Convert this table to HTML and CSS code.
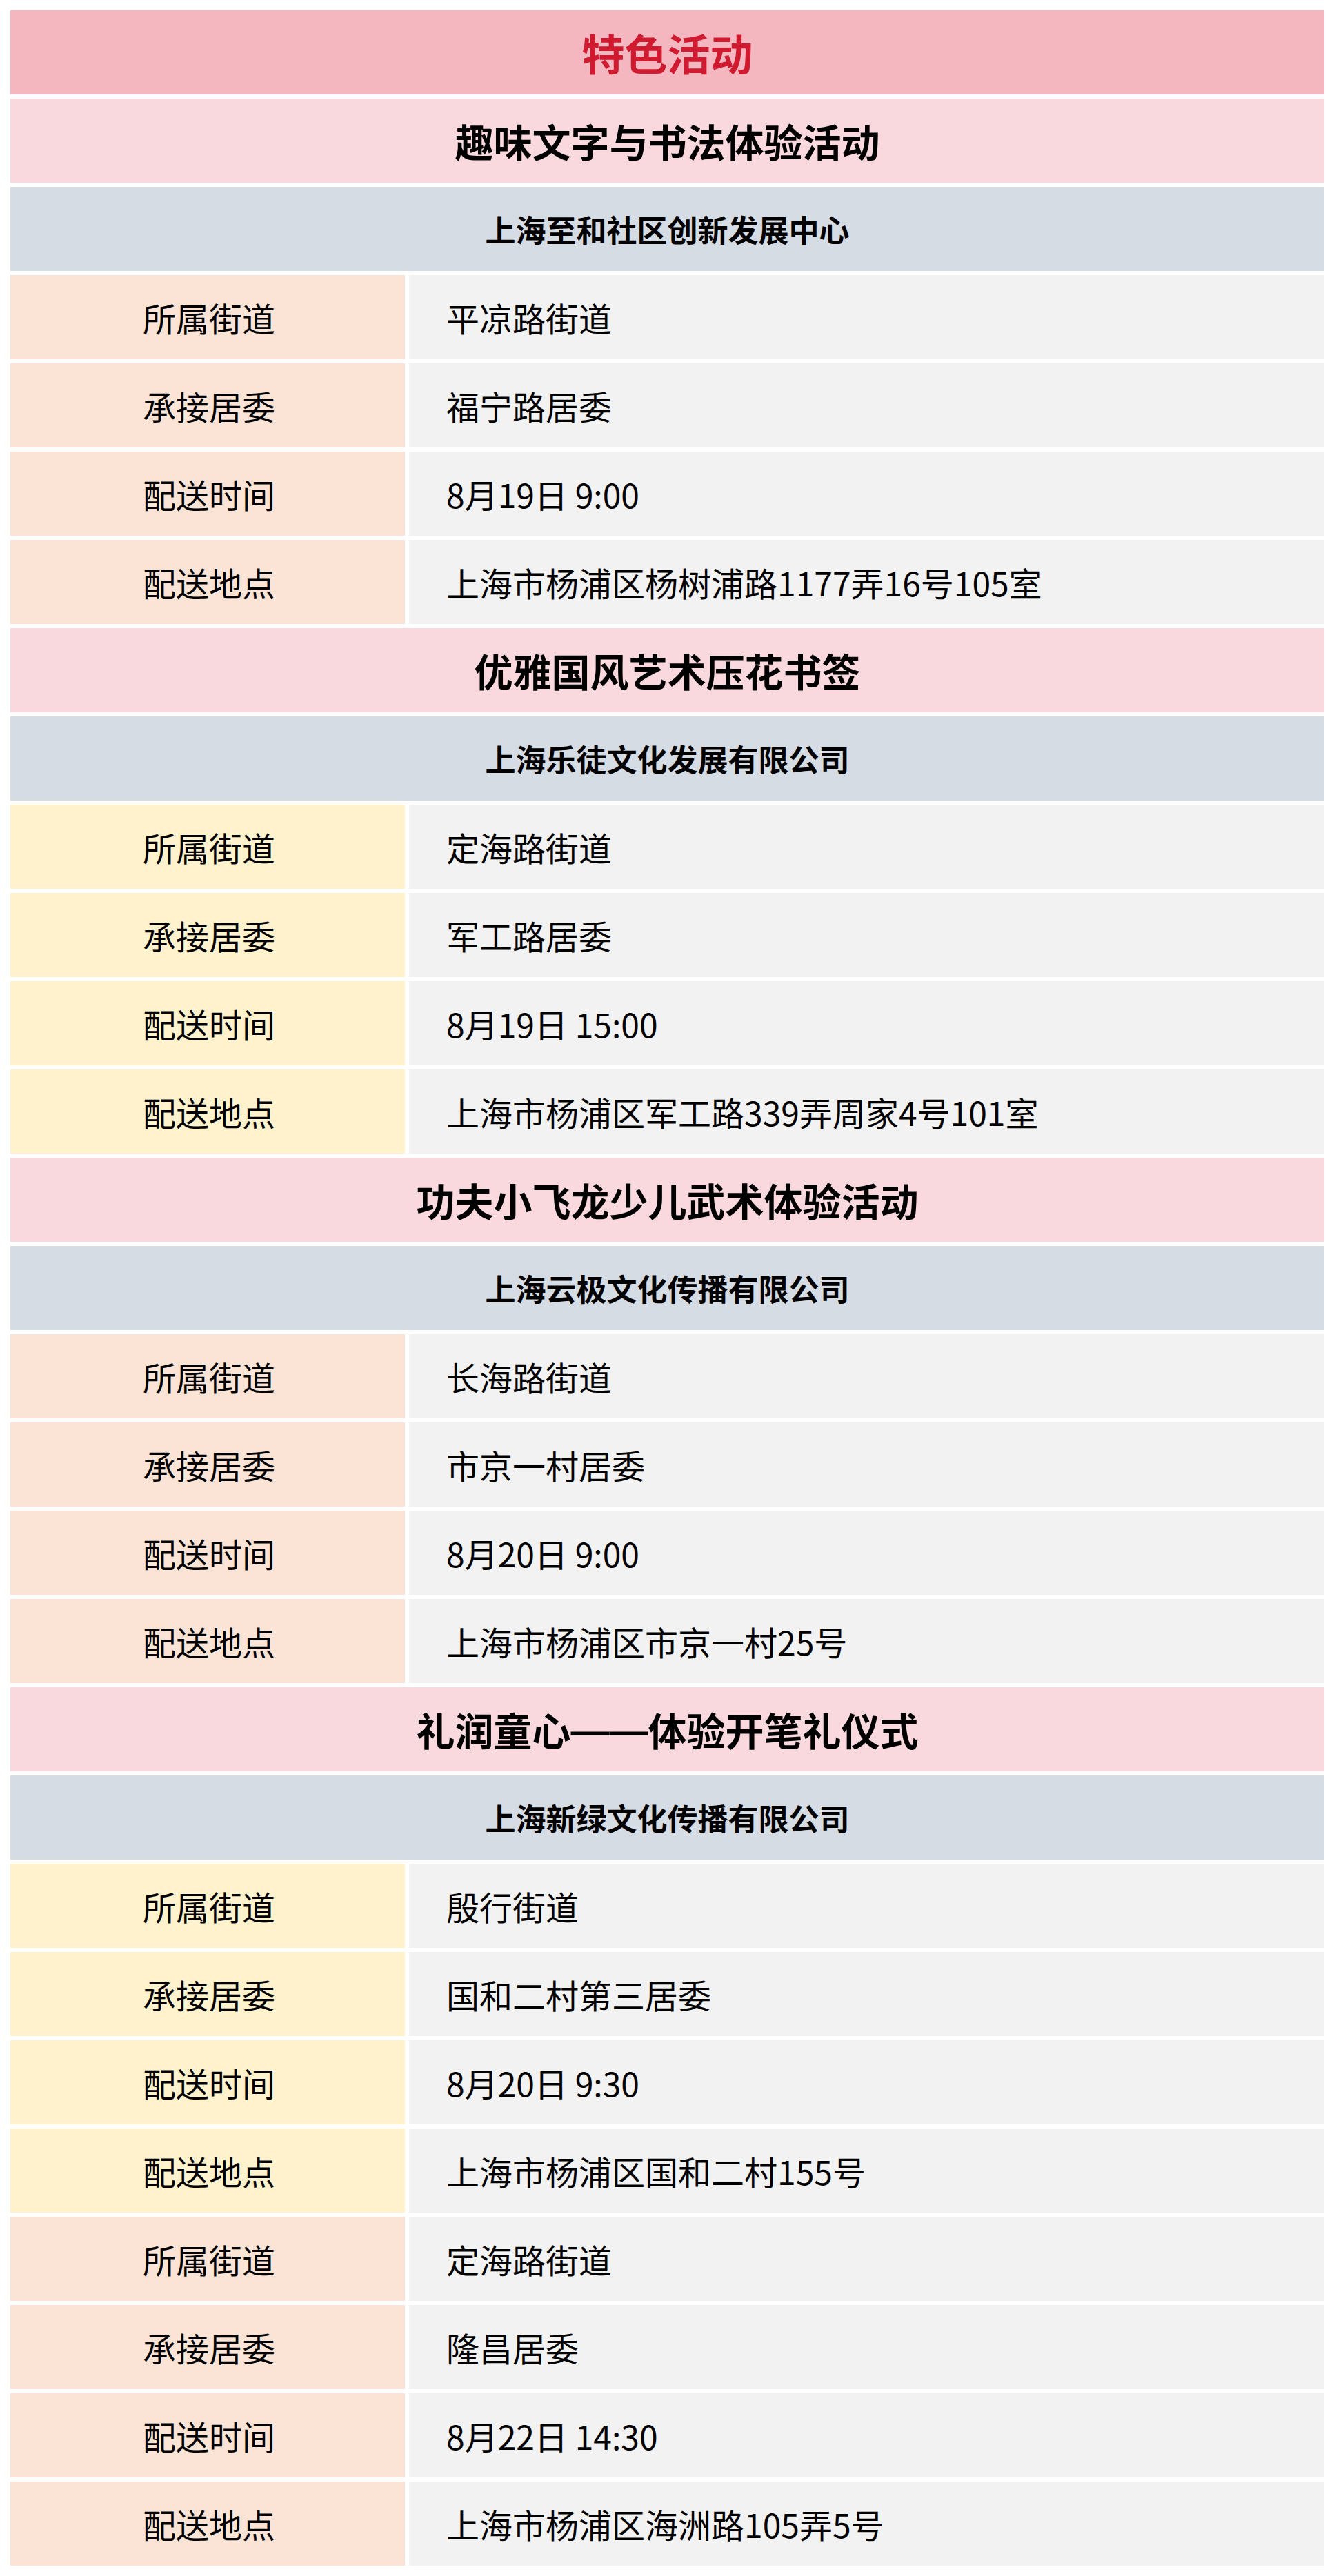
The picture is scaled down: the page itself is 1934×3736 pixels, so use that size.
FILE: index.html
```html
<!DOCTYPE html>
<html lang="zh-CN">
<head>
<meta charset="utf-8">
<title>特色活动</title>
<link rel="stylesheet" href="styles.css">
</head>
<body>
<div class="sheet">
  <div class="cell span title">特色活动</div>

  <div class="cell span name">趣味文字与书法体验活动</div>
  <div class="cell span org">上海至和社区创新发展中心</div>
  <div class="cell label peach">所属街道</div><div class="cell value">平凉路街道</div>
  <div class="cell label peach">承接居委</div><div class="cell value">福宁路居委</div>
  <div class="cell label peach">配送时间</div><div class="cell value">8月19日 9:00</div>
  <div class="cell label peach">配送地点</div><div class="cell value">上海市杨浦区杨树浦路1177弄16号105室</div>

  <div class="cell span name">优雅国风艺术压花书签</div>
  <div class="cell span org">上海乐徒文化发展有限公司</div>
  <div class="cell label yellow">所属街道</div><div class="cell value">定海路街道</div>
  <div class="cell label yellow">承接居委</div><div class="cell value">军工路居委</div>
  <div class="cell label yellow">配送时间</div><div class="cell value">8月19日 15:00</div>
  <div class="cell label yellow">配送地点</div><div class="cell value">上海市杨浦区军工路339弄周家4号101室</div>

  <div class="cell span name">功夫小飞龙少儿武术体验活动</div>
  <div class="cell span org">上海云极文化传播有限公司</div>
  <div class="cell label peach">所属街道</div><div class="cell value">长海路街道</div>
  <div class="cell label peach">承接居委</div><div class="cell value">市京一村居委</div>
  <div class="cell label peach">配送时间</div><div class="cell value">8月20日 9:00</div>
  <div class="cell label peach">配送地点</div><div class="cell value">上海市杨浦区市京一村25号</div>

  <div class="cell span name">礼润童心<span class="dash">——</span>体验开笔礼仪式</div>
  <div class="cell span org">上海新绿文化传播有限公司</div>
  <div class="cell label yellow">所属街道</div><div class="cell value">殷行街道</div>
  <div class="cell label yellow">承接居委</div><div class="cell value">国和二村第三居委</div>
  <div class="cell label yellow">配送时间</div><div class="cell value">8月20日 9:30</div>
  <div class="cell label yellow">配送地点</div><div class="cell value">上海市杨浦区国和二村155号</div>
  <div class="cell label peach">所属街道</div><div class="cell value">定海路街道</div>
  <div class="cell label peach">承接居委</div><div class="cell value">隆昌居委</div>
  <div class="cell label peach">配送时间</div><div class="cell value">8月22日 14:30</div>
  <div class="cell label peach">配送地点</div><div class="cell value">上海市杨浦区海洲路105弄5号</div>
</div>
</body>
</html>
```

FILE: styles.css
```css
html, body {
  margin: 0;
  background: #ffffff;
}
body {
  padding: 15px 14px 15px 15px;
  font-family: "Microsoft YaHei", "Noto Sans CJK SC", "Noto Sans", sans-serif;
  color: #000;
}
.sheet {
  display: grid;
  grid-template-columns: 572px 1fr;
  grid-auto-rows: 122px;
  gap: 6px;
}
.cell {
  display: flex;
  align-items: center;
  font-size: 48px;
  line-height: 1;
  white-space: nowrap;
}
.span {
  grid-column: 1 / -1;
  justify-content: center;
  font-weight: 700;
}
.title {
  background: #f4b6bf;
  color: #d01a30;
  font-size: 62px;
}
.name {
  background: #fad9de;
  font-size: 56px;
}
.dash {
  font-family: "Liberation Sans", Arial, sans-serif;
  font-weight: 700;
  position: relative;
  top: 2px;
}
.org {
  background: #d6dce4;
  font-size: 44px;
}
.label {
  justify-content: center;
  padding-left: 4px;
}
.peach {
  background: #fbe4d5;
}
.yellow {
  background: #fff2cc;
}
.value {
  background: #f2f2f2;
  padding-left: 54px;
}
```
